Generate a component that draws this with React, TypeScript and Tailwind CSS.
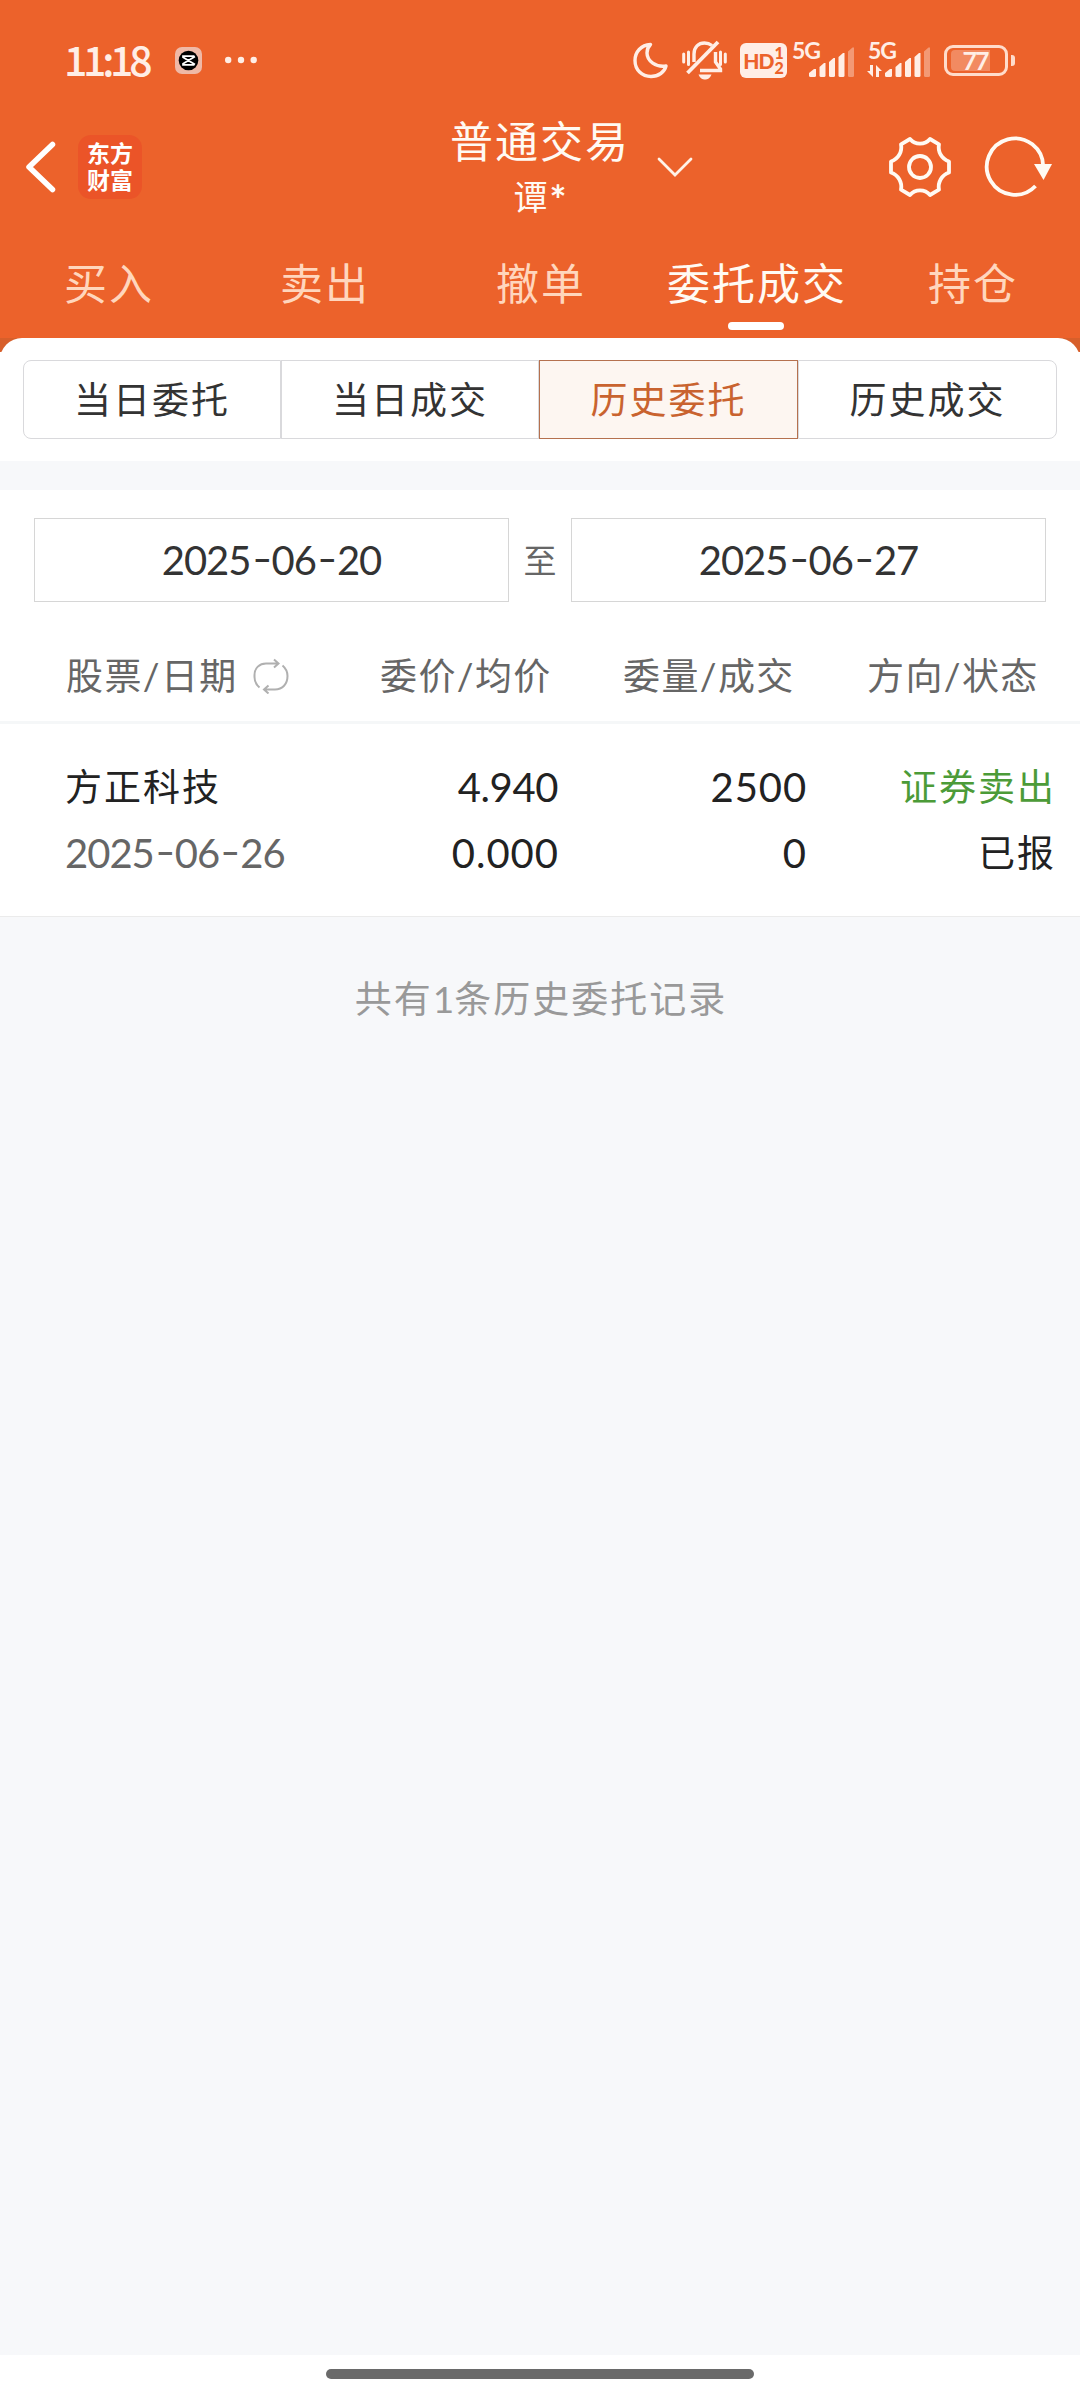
const tabs = ['买入', '卖出', '撤单', '委托成交', '持仓']

const segments = ['当日委托', '当日成交', '历史委托', '历史成交']

const orders = [
  {
    name: '方正科技',
    date: '2025-06-26',
    price: '4.940',
    avgPrice: '0.000',
    amount: '2500',
    dealt: '0',
    direction: '证券卖出',
    status: '已报'
  }
]

// dashes are drawn wider and higher than the font's own hyphen
function DateText({ value }: { value: string }) {
  return (
    <span className="inline-flex whitespace-pre tracking-[-1px]">
      {value.split(/(-)/).map((part, index) =>
        part === '-' ? (
          <span key={index} className="inline-block w-[21px] text-center -translate-y-[2px] scale-x-[1.35]">-</span>
        ) : (
          <span key={index}>{part}</span>
        )
      )}
    </span>
  )
}

function Signal() {
  return (
    <svg width="46" height="30" viewBox="0 0 46 30" fill="#ffeee6">
      <path d="M0 28.500V26L5 22H7V28.500Q7 30 5.500 30H1.500Q0 30 0 28.500Z" />
      <path d="M10.500 20L15 16H16.500V28.500Q16.500 30 15 30H12Q10.500 30 10.500 28.500Z" />
      <path d="M20 15L24.500 11H26V28.500Q26 30 24.500 30H21.500Q20 30 20 28.500Z" />
      <path d="M29.500 10L34 6H35.500V28.500Q35.500 30 34 30H31Q29.500 30 29.500 28.500Z" />
      <path opacity=".4" d="M39 4.500L43.500 .5H45V28.500Q45 30 43.500 30H40.500Q39 30 39 28.500Z" />
    </svg>
  )
}

function StatusBar() {
  return (
    <div className="flex h-[106px] items-center pt-[14px] pl-[64px] pr-[65px] text-[#ffeee6]">
      <span className="w-[111px] pb-[4px] text-[41px] leading-none font-medium font-['Noto_Sans_CJK_SC',sans-serif] tracking-[-4.3px]">11:18</span>
      <svg width="27" height="27" viewBox="0 0 27 27">
        <rect width="27" height="27" rx="7" fill="#efb9a7" />
        <circle cx="13.500" cy="13.500" r="9.800" fill="#000" />
        <path d="M20 9.500L8 16.800V17.800H18.500V16.500M20 17.500L8 10.200V9.200H18.500V10.500" fill="none" stroke="#fff" strokeWidth="1.700" />
      </svg>
      <svg className="ml-[23px]" width="32" height="8" viewBox="0 0 32 8" fill="#ffeee6">
        <circle cx="3.200" cy="4" r="3.200" />
        <circle cx="16" cy="4" r="3.200" />
        <circle cx="28.700" cy="4" r="3.200" />
      </svg>

      <div className="ml-auto flex items-center">
        <svg width="36" height="38" viewBox="0 0 36 38" fill="none" stroke="#ffeee6" strokeWidth="3.400" strokeLinejoin="round">
          <path d="M17.500 3.500C8 4 2 11 2 19.500C2 29 9 35.500 18 35.500C25.500 35.500 31.500 31 33 25C23 26.500 14 20 14 12C14 8.500 15.500 5.500 17.500 3.500Z" />
        </svg>
        <svg className="ml-[13px]" width="45" height="40" viewBox="0 0 45 40" fill="none" stroke="#ffeee6" strokeWidth="3.400">
          <path d="M1.700 14V22M6.500 12V24.500M38.500 12V24.500M43.300 14V22" strokeWidth="3" strokeLinecap="round" />
          <path d="M12 22V14C12 7 16.500 3 22.500 3C25.500 3 28 4 30 5.500M33.500 12V22L38.500 29V30.500H18" />
          <path d="M36 2L5.500 33" strokeWidth="3.800" />
          <path d="M16.500 34.500H29.500C28 38.500 25.500 39.500 23 39.500C20.500 39.500 18 38.500 16.500 34.500Z" fill="#ffeee6" stroke="none" />
        </svg>
        <div className="ml-[13px] flex h-[35px] w-[47px] items-center justify-center gap-px rounded-[6px] bg-[#ffeee6] text-[#ec622b] font-['Lato',sans-serif] font-black">
          <span className="text-[21px] leading-none tracking-[-1px]">HD</span>
          <span className="flex flex-col text-[16px] leading-[15px]">
            <span>1</span>
            <span>2</span>
          </span>
        </div>
        <div className="relative ml-[6px] h-[36px] w-[62px]">
          <span className="absolute -left-px -top-px text-[23px] leading-[18px] font-bold font-['Lato',sans-serif] tracking-[-1px]">5G</span>
          <div className="absolute bottom-[1px] left-[16px]"><Signal /></div>
        </div>
        <div className="relative ml-[12px] h-[36px] w-[66px]">
          <span className="absolute left-px -top-px text-[23px] leading-[18px] font-bold font-['Lato',sans-serif] tracking-[-1px]">5G</span>
          <svg className="absolute bottom-[1px] left-0" width="15" height="12" viewBox="0 0 15 12" fill="#ffeee6">
            <path d="M3 0H6V12L0 6H3ZM9 12V0L15 6H12V12Z" />
          </svg>
          <div className="absolute bottom-[1px] left-[18px]"><Signal /></div>
        </div>
        <div className="ml-[11px] flex items-center gap-[3px]">
          <div className="relative flex h-[31px] w-[64px] items-center justify-center rounded-[9px] border-3 border-[#ffdccb]">
            <div className="absolute left-[4px] top-[2px] h-[21px] w-[39px] rounded-l-[4px] bg-[#f28a61]" />
            <span className="relative pr-[2px] text-[25px] leading-none font-bold font-['Lato',sans-serif] tracking-[-2px]">77</span>
          </div>
          <div className="h-[11px] w-[4px] rounded-r-[3px] bg-[#ffdccb]" />
        </div>
      </div>
    </div>
  )
}

function TitleBar() {
  return (
    <div className="grid h-[122px] grid-cols-[1fr_auto_1fr] items-center pl-[25px] pr-[27px] text-[#fffaf3]">
      <div className="flex items-center">
        <svg width="31" height="52" viewBox="0 0 31 52" fill="none" stroke="#fff" strokeWidth="5.500" strokeLinecap="round" strokeLinejoin="round">
          <path d="M27.500 3.500L4 26L27.500 48.500" />
        </svg>
        <div className="ml-[22px] flex h-[64px] w-[64px] flex-col items-center justify-center rounded-[13px] bg-[#eb5428] text-[23px] leading-[27px] font-bold text-white">
          <span>东方</span>
          <span>财富</span>
        </div>
      </div>
      <div className="flex flex-col items-center pt-[3px] pl-[2px]">
        <span className="text-[43px] leading-[56px] tracking-[2px]">普通交易</span>
        <span className="text-[34px] leading-[54px]">
          谭<span className="pl-[2px] text-[40px] leading-none font-bold align-[-5px]">*</span>
        </span>
      </div>
      <div className="flex items-center justify-end">
        <svg className="mr-auto ml-[27px]" width="36" height="22" viewBox="0 0 36 22" fill="none" stroke="#fff3e8" strokeWidth="2.800" strokeLinecap="round">
          <path d="M2 3L18 19L34 3" />
        </svg>
        <svg width="64" height="64" viewBox="-32 -32 64 64" fill="none" stroke="#fffaf3" strokeWidth="3.800" strokeLinejoin="round">
          <path d="M-10 -28A13 13 0 0 0 10 -28L19 -22.700A15 15 0 0 0 29 -5.500V5.500A15 15 0 0 0 19 22.700L10 28A13 13 0 0 0 -10 28L-19 22.700A15 15 0 0 0 -29 5.500V-5.500A15 15 0 0 0 -19 -22.700Z" />
          <circle r="11" />
        </svg>
        <svg className="ml-[31px]" width="70" height="64" viewBox="-32 -32 70 64" fill="none" stroke="#fffaf3" strokeWidth="3.800">
          <path d="M20.500 19A28.200 28.200 0 1 1 28.200 0" />
          <path d="M19 -3H37L28.500 13Z" fill="#fffaf3" stroke="none" />
        </svg>
      </div>
    </div>
  )
}

function SwapIcon() {
  return (
    <svg className="ml-[15px]" width="36" height="36" viewBox="0 0 36 36" fill="none" stroke="#b0b0b0" strokeWidth="2">
      <path d="M6.500 29.500C3 26.500 1.500 23 1.500 19V17C1.500 10 6.500 5.500 13 5.500H25M21 1.500L25.500 5.500L21 9.500" />
      <path d="M29.500 7.500C33 10.500 34.500 14 34.500 18C34.500 26 29.500 31.500 22 31.500H11.500M15.500 27.500L11 31.500L15.500 35.500" />
    </svg>
  )
}

export default function App() {
  return (
    <div className="flex h-[2400px] w-[1080px] flex-col bg-[#f7f8fa] text-[37px] leading-[48px] text-[#222] font-['Lato','Noto_Sans_CJK_SC',sans-serif]">
      <header className="bg-[#ec622b]">
        <StatusBar />
        <TitleBar />
        <nav className="grid h-[110px] grid-cols-5 text-[43px] tracking-[2px]">
          {tabs.map((tab) => {
            const active = tab === '委托成交'
            return (
              <div key={tab} className={`flex flex-col items-center pt-[28px] ${active ? 'text-[#fffaf3]' : 'text-[#ffd6bd]'}`}>
                <span className="pl-[2px] leading-[56px]">{tab}</span>
                {active && <span className="mt-[10px] h-[8px] w-[56px] rounded-full bg-white" />}
              </div>
            )
          })}
        </nav>
      </header>

      <div className="bg-linear-to-b from-[#d75f2b] from-[14px] to-white to-[14px]">
        <div className="h-[123px] rounded-t-[22px] bg-white px-[23px] pt-[22px]">
          <div className="grid h-[79px] grid-cols-[258px_258px_259px_259px] tracking-[2px]">
            {segments.map((segment) => (
              <button
                key={segment}
                className={`border first:rounded-l-[8px] last:rounded-r-[8px] ${
                  segment === '历史委托'
                    ? 'border-[#b5714f] bg-[#fdf6f1] text-[#c9632f]'
                    : 'border-[#d9d9dc] text-[#333]'
                }`}
              >
                {segment}
              </button>
            ))}
          </div>
        </div>
      </div>

      <section className="mt-[29px] border-b border-[#ebebeb] bg-white">
        <div className="flex items-center px-[34px] pt-[28px] text-[40px] text-[#333]">
          <div className="flex h-[84px] w-[475px] items-center justify-center border border-[#d6d6d6]">
            <DateText value="2025-06-20" />
          </div>
          <span className="flex-1 text-center text-[33px] text-[#666]">至</span>
          <div className="flex h-[84px] w-[475px] items-center justify-center border border-[#d6d6d6]">
            <DateText value="2025-06-27" />
          </div>
        </div>

        <div className="mt-[50px] flex h-[72px] border-b-3 border-[#f5f7f8] pl-[66px] text-[#666] tracking-[1.4px]">
          <div className="flex w-[314px] items-start">
            <span>股票/日期</span>
            <span className="mt-[6px]"><SwapIcon /></span>
          </div>
          <span className="w-[243px]">委价/均价</span>
          <span className="w-[244px]">委量/成交</span>
          <span>方向/状态</span>
        </div>

        {orders.map((order) => (
          <div key={order.name} className="grid h-[192px] grid-cols-[294px_1fr_247px_249px] content-start gap-y-[18px] pt-[39px] pl-[65px] pr-[24px] text-right">
            <span className="text-left tracking-[2px]">{order.name}</span>
            <span className="pr-[2px] text-[40px] tracking-[-.4px]">{order.price}</span>
            <span className="text-[40px] tracking-[.9px]">{order.amount}</span>
            <span className="text-[#4c9b38] tracking-[2px]">{order.direction}</span>
            <span className="text-left text-[40px] text-[#666]"><DateText value={order.date} /></span>
            <span className="pr-px text-[40px] tracking-[1px]">{order.avgPrice}</span>
            <span className="pr-px text-[40px]">{order.dealt}</span>
            <span className="tracking-[2px]">{order.status}</span>
          </div>
        ))}
      </section>

      <p className="mt-[58px] pl-[2px] text-center text-[#999] tracking-[2px]">
        共有<span className="tracking-[0px]">1</span>条历史委托记录
      </p>

      <footer className="mt-auto flex h-[45px] justify-center bg-white pt-[14px]">
        <div className="h-[10px] w-[428px] rounded-full bg-[#6a6a6a]" />
      </footer>
    </div>
  )
}
